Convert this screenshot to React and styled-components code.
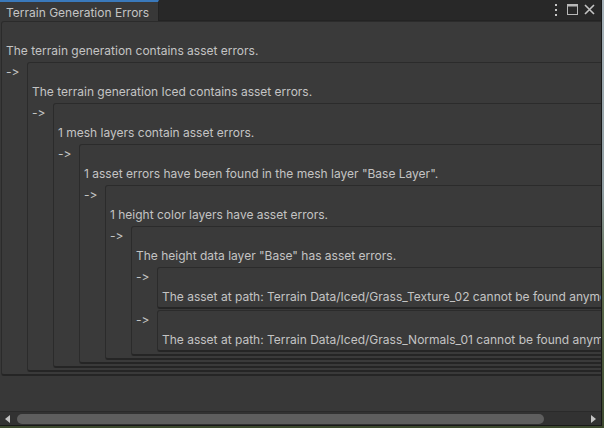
import React from "react";
import styled, { createGlobalStyle } from "styled-components";

const Global = createGlobalStyle`
  html, body { margin: 0; padding: 0; }
  body {
    width: 604px;
    height: 428px;
    overflow: hidden;
    background: linear-gradient(to bottom, #a7b3ba 0%, #8e9ca0 45%, #5d6b4c 65%, #3d4a2e 100%);
    font-family: Inter, "Noto Sans", sans-serif;
    font-feature-settings: "calt" 0, "liga" 0;
    font-variant-ligatures: none;
  }
`;

const Window = styled.div`
  width: 601px;
  height: 425px;
  background: #383838;
  border-right: 1px solid #191919;
  border-bottom: 1px solid #191919;
  display: flex;
  flex-direction: column;
  overflow: hidden;
  color: #c4c4c4;
  font-size: 12px;
`;

const Header = styled.div`
  height: 21px;
  flex: none;
  display: flex;
  background: #282828;
`;

const Tab = styled.div`
  width: 159px;
  box-sizing: border-box;
  border-top: 2px solid #3a79bb;
  border-right: 1px solid #232323;
  background: #383838;
  padding-left: 6px;
  line-height: 21px;
  white-space: nowrap;
`;

const HeaderFill = styled.div`
  flex: 1;
  border-bottom: 1px solid #232323;
  display: flex;
  justify-content: flex-end;
  align-items: center;
  padding-right: 6px;
  padding-bottom: 1px;
`;

const Icon = styled.svg`
  display: block;
  flex: none;
  margin-left: ${(p) => p.$gap || 0}px;
`;

const Content = styled.div`
  flex: 1;
  overflow: hidden;
  padding-left: 1px;
`;

const Box = styled.div`
  width: max-content;
  min-width: 100%;
  box-sizing: border-box;
  background: #3a3a3a;
  border: 1px solid #2b2b2b;
  border-bottom: 2px solid #252525;
  border-radius: 3px;
  padding: 20px 3px 2px 4px;
`;

const Message = styled.div`
  line-height: 17px;
  white-space: nowrap;
`;

const Children = styled.div`
  margin-top: 3px;
  display: flex;
  flex-direction: column;
  gap: 1px;
`;

const Row = styled.div`
  display: flex;
  align-items: flex-start;
`;

const Arrow = styled.div`
  width: 21px;
  flex: none;
  padding-top: 2px;
  line-height: 16px;
  white-space: nowrap;
`;

const ScrollBar = styled.div`
  height: 14px;
  flex: none;
  background: #323232;
  border-top: 1px solid #2a2a2a;
  box-sizing: border-box;
  display: flex;
  align-items: center;
  padding: 0 5px;
`;

const Track = styled.div`
  flex: 1;
  height: 100%;
  display: flex;
  align-items: center;
  padding: 0 6px;
`;

const Thumb = styled.div`
  width: 527px;
  height: 10px;
  border-radius: 5px;
  background: #5e5e5e;
  margin-top: 1px;
`;

const tree = {
  text: "The terrain generation contains asset errors.",
  children: [
    {
      text: "The terrain generation Iced contains asset errors.",
      children: [
        {
          text: "1 mesh layers contain asset errors.",
          children: [
            {
              text: '1 asset errors have been found in the mesh layer "Base Layer".',
              children: [
                {
                  text: "1 height color layers have asset errors.",
                  children: [
                    {
                      text: 'The height data layer "Base" has asset errors.',
                      children: [
                        { text: "The asset at path: Terrain Data/Iced/Grass_Texture_02 cannot be found anymore." },
                        { text: "The asset at path: Terrain Data/Iced/Grass_Normals_01 cannot be found anymore." },
                      ],
                    },
                  ],
                },
              ],
            },
          ],
        },
      ],
    },
  ],
};

function ErrorNode({ node }) {
  return (
    <Box>
      <Message>{node.text}</Message>
      {node.children && (
        <Children>
          {node.children.map((c, i) => (
            <Row key={i}>
              <Arrow>-&gt;</Arrow>
              <ErrorNode node={c} />
            </Row>
          ))}
        </Children>
      )}
    </Box>
  );
}

export default function App() {
  return (
    <>
      <Global />
      <Window>
        <Header>
          <Tab>Terrain Generation Errors</Tab>
          <HeaderFill>
            <Icon width="4" height="12" viewBox="0 0 4 12">
              <rect x="1" y="0" width="2" height="2" fill="#c4c4c4" />
              <rect x="1" y="5" width="2" height="2" fill="#c4c4c4" />
              <rect x="1" y="10" width="2" height="2" fill="#c4c4c4" />
            </Icon>
            <Icon $gap={9} width="11" height="11" viewBox="0 0 11 11">
              <rect x="0.5" y="0.5" width="10" height="10" fill="none" stroke="#b8b8b8" />
              <rect x="0.5" y="0.5" width="10" height="2" fill="#b8b8b8" />
            </Icon>
            <Icon $gap={6} width="11" height="11" viewBox="0 0 11 11">
              <path d="M1 1 L10 10 M10 1 L1 10" stroke="#c4c4c4" strokeWidth="1.6" />
            </Icon>
          </HeaderFill>
        </Header>
        <Content>
          <ErrorNode node={tree} />
        </Content>
        <ScrollBar>
          <Icon width="6" height="8" viewBox="0 0 6 8">
            <path d="M5 0 L0 4 L5 8 Z" fill="#c4c4c4" />
          </Icon>
          <Track>
            <Thumb />
          </Track>
          <Icon width="6" height="8" viewBox="0 0 6 8">
            <path d="M1 0 L6 4 L1 8 Z" fill="#c4c4c4" />
          </Icon>
        </ScrollBar>
      </Window>
    </>
  );
}
